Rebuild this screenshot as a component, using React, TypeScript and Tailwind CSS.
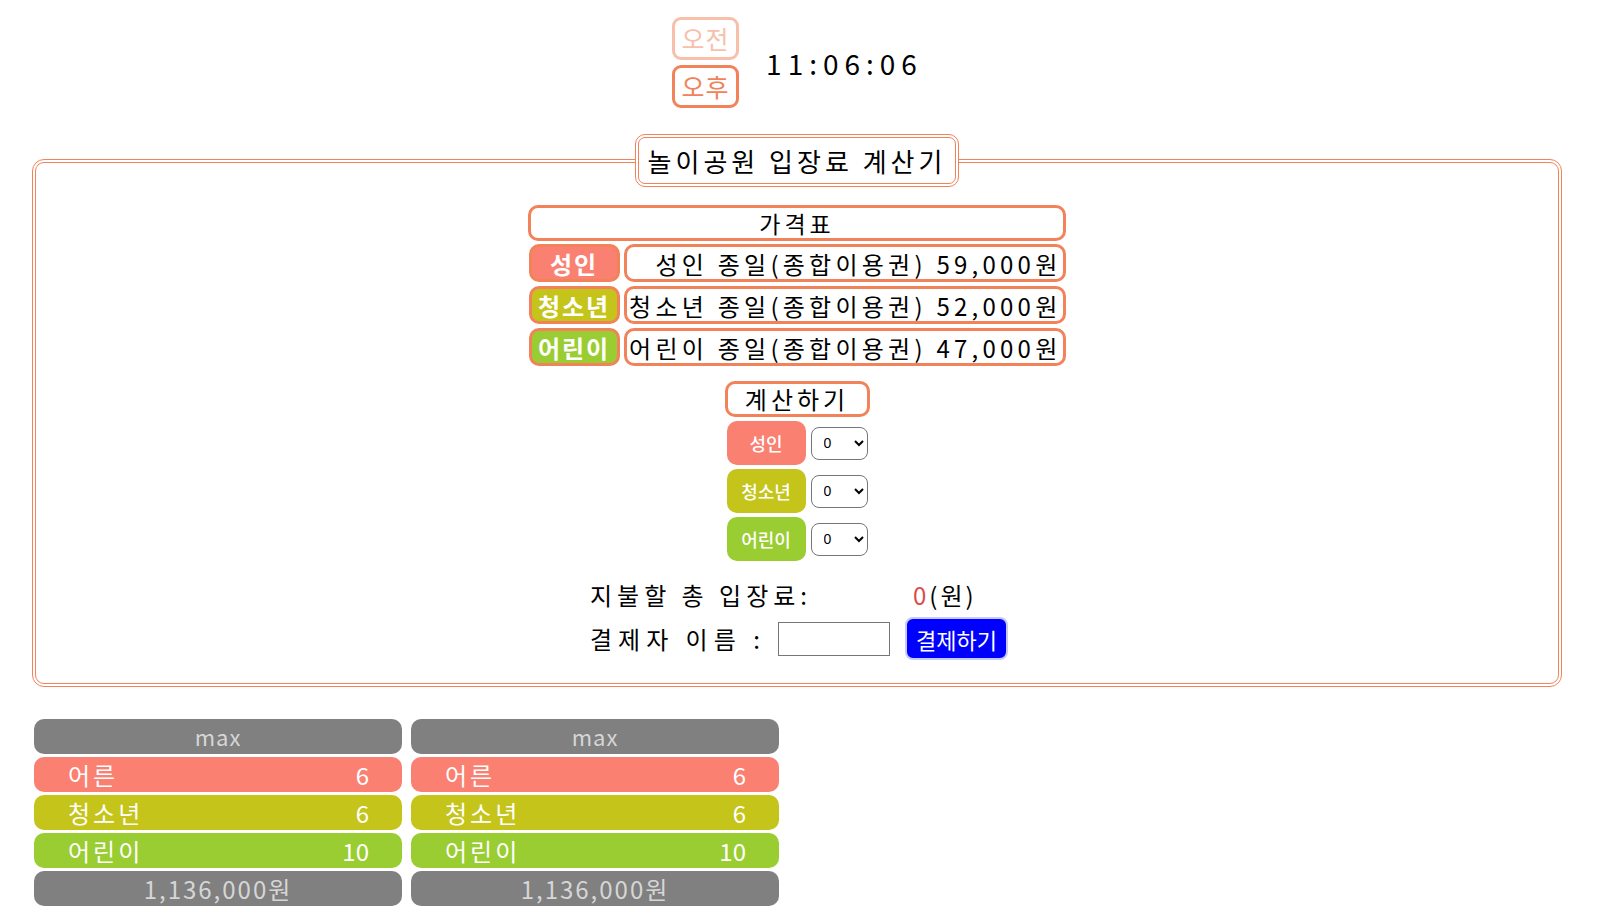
import React, { useState } from 'react';

interface Ticket {
  key: string;
  label: string;
  name: string;
  price: number;
  bg: string;
}

const tickets: Ticket[] = [
  { key: 'adult', label: '성인', name: '성인 종일(종합이용권) 59,000원', price: 59000, bg: 'bg-[#fa8072]' },
  { key: 'teen', label: '청소년', name: '청소년 종일(종합이용권) 52,000원', price: 52000, bg: 'bg-[#c5c41a]' },
  { key: 'child', label: '어린이', name: '어린이 종일(종합이용권) 47,000원', price: 47000, bg: 'bg-[#9acd32]' },
];

const summaryRows = [
  { label: '어른', count: 6, bg: 'bg-[#fa8072]' },
  { label: '청소년', count: 6, bg: 'bg-[#c5c41a]' },
  { label: '어린이', count: 10, bg: 'bg-[#9acd32]' },
];

const SummaryCard: React.FC = () => (
  <div className="w-[368px] flex flex-col gap-[3px]">
    <div className="h-[35px] rounded-[10px] bg-[#808080] text-[#d6d6d6] text-[22px] leading-[35px] text-center tracking-[1px]">max</div>
    {summaryRows.map((r) => (
      <div
        key={r.label}
        className={`h-[35px] rounded-[10px] ${r.bg} text-white text-[24px] leading-[35px] flex justify-between pl-[34px] pr-[33px]`}
      >
        <span className="tracking-[3px]">{r.label}</span>
        <span>{r.count}</span>
      </div>
    ))}
    <div className="h-[35px] rounded-[10px] bg-[#808080] text-[#d6d6d6] text-[24px] leading-[35px] text-center tracking-[2px]">
      1,136,000원
    </div>
  </div>
);

const App: React.FC = () => {
  const [counts, setCounts] = useState<Record<string, number>>({ adult: 0, teen: 0, child: 0 });
  const [payer, setPayer] = useState('');

  const total = tickets.reduce((sum, t) => sum + t.price * counts[t.key], 0);

  return (
    <div className="min-h-screen bg-white text-black font-['Noto_Sans_CJK_KR',sans-serif]">
      {/* clock */}
      <div className="flex justify-center items-center gap-[27px] pt-[17px] pr-[4px]">
        <div className="flex flex-col gap-[5px]">
          <div className="w-[67px] h-[43px] rounded-[9px] border-[3px] border-[#f2825a] opacity-50 text-[#f2825a] text-[25px] leading-[37px] text-center tracking-[1px]">
            오전
          </div>
          <div className="w-[67px] h-[43px] rounded-[9px] border-[3px] border-[#f2825a] text-[#f2825a] text-[25px] leading-[37px] text-center tracking-[1px]">
            오후
          </div>
        </div>
        <div className="text-[28px] tracking-[6px] leading-none">11:06:06</div>
      </div>

      {/* calculator */}
      <fieldset className="mt-[26px] ml-[32px] mr-[37px] border-[4px] border-double border-[#f2825a] rounded-[12px] pb-[23px]">
        <legend className="mx-auto h-[53px] px-[9px] border-[4px] border-double border-[#f2825a] rounded-[10px] text-[26px] leading-[45px] tracking-[4px]">
          놀이공원 입장료 계산기
        </legend>

        <div className="flex flex-col items-center mt-[18px]">
          <div className="w-[538px] h-[36px] rounded-[10px] border-[3px] border-[#f2825a] text-[23px] leading-[30px] text-center tracking-[4px]">
            가격표
          </div>
          <div className="flex flex-col gap-[4px] mt-[3px]">
            {tickets.map((t) => (
              <div key={t.key} className="flex gap-[4px]">
                <div
                  className={`w-[91px] h-[38px] rounded-[10px] border-[3px] border-[#f2825a] ${t.bg} text-white font-bold text-[24px] leading-[33px] text-center tracking-[2px]`}
                >
                  {t.label}
                </div>
                <div className="w-[442px] h-[38px] rounded-[10px] border-[3px] border-[#f2825a] text-[24px] leading-[33px] text-right pr-[1px] tracking-[4.25px] whitespace-nowrap overflow-hidden">
                  {t.name}
                </div>
              </div>
            ))}
          </div>

          <div className="mt-[15px] w-[145px] h-[36px] rounded-[10px] border-[3px] border-[#f2825a] text-[24px] leading-[30px] text-center tracking-[4px]">
            계산하기
          </div>

          <div className="flex flex-col gap-[4px] mt-[4px]">
            {tickets.map((t) => (
              <div key={t.key} className="flex items-center gap-[5px]">
                <div className={`w-[79px] h-[44px] rounded-[10px] ${t.bg} text-white text-[18px] font-medium leading-[44px] text-center`}>
                  {t.label}
                </div>
                <select
                  value={counts[t.key]}
                  onChange={(e) => setCounts({ ...counts, [t.key]: Number(e.target.value) })}
                  className="w-[57px] h-[33px] rounded-[8px] border border-[#767676] bg-white text-[14px] pl-[8px] font-['Liberation_Sans',sans-serif]"
                >
                  {Array.from({ length: 11 }, (_, i) => (
                    <option key={i} value={i}>
                      {i}
                    </option>
                  ))}
                </select>
              </div>
            ))}
          </div>

          <div className="mt-[19px] flex flex-col gap-[7px] w-[420px] ml-[6px]">
            <div className="flex items-center h-[30px] text-[24px] tracking-[5px]">
              <span className="w-[323px]">지불할 총 입장료:</span>
              <span className="tracking-[3px]">
                <span className="text-[#dc4b4b]">{total.toLocaleString()}</span>(원)
              </span>
            </div>
            <div className="flex items-center text-[24px] tracking-[6px]">
              <span className="w-[188px]">결제자 이름 :</span>
              <input
                value={payer}
                onChange={(e) => setPayer(e.target.value)}
                className="w-[112px] h-[34px] border border-[#767676] bg-white"
              />
              <button className="ml-[15px] w-[103px] h-[43px] rounded-[8px] border-2 border-[#c9c9f5] bg-[#0000ff] text-white text-[22px] leading-none tracking-normal">
                결제하기
              </button>
            </div>
          </div>
        </div>
      </fieldset>

      {/* summary cards */}
      <div className="flex gap-[9px] mt-[32px] ml-[34px] pb-[10px]">
        <SummaryCard />
        <SummaryCard />
      </div>
    </div>
  );
};

export default App;
